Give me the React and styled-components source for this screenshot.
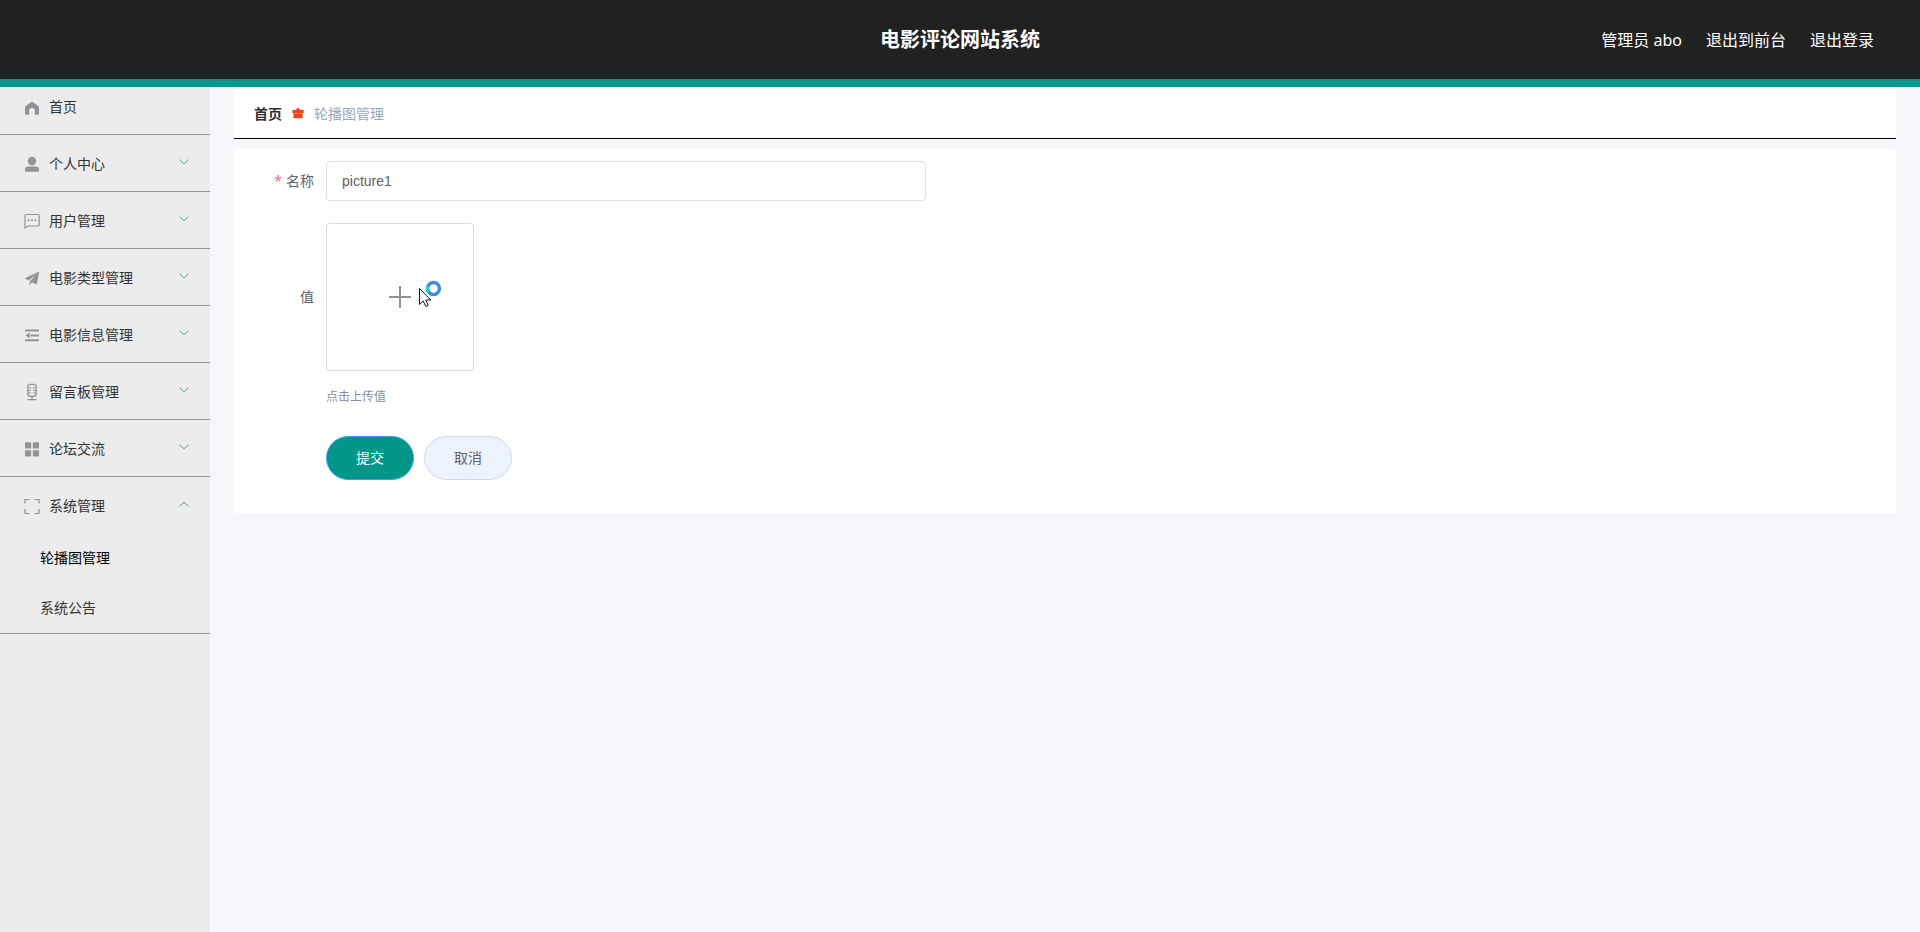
import React from "react";
import styled, { createGlobalStyle } from 'styled-components';

const GlobalStyles = createGlobalStyle`
  * {
    box-sizing: border-box;
  }
  body {
    margin: 0;
    background: #f5f7fb;
    color: #333;
    font-family: "Liberation Sans", "Noto Sans CJK SC", sans-serif;
    font-size: 14px;
  }
  button, input {
    font-family: inherit;
    font-size: inherit;
  }
`;

const Page = styled.div`
  display: flex;
  flex-direction: column;
  min-height: 100vh;
`;

const Header = styled.header`
  display: grid;
  grid-template-columns: 1fr auto 1fr;
  align-items: center;
  height: 87px;
  padding: 0 46px;
  background: #212121;
  border-bottom: 8px solid #009688;
  color: #fff;
  font-family: "Noto Sans", "Noto Sans CJK SC", sans-serif;
`;

const Title = styled.h1`
  grid-column: 2;
  margin: 0;
  font-size: 20px;
  line-height: 28px;
  font-weight: 700;
`;

const UserNav = styled.div`
  display: flex;
  justify-content: flex-end;
  gap: 24px;
  font-size: 16px;
  line-height: 24px;
`;

const HeaderLink = styled.a`
  color: #fff;
  text-decoration: none;
`;

const Body = styled.div`
  display: flex;
  flex: 1;
`;

const Sidebar = styled.nav`
  flex: 0 0 210px;
  background: #ececec;
`;

const MenuGroup = styled.div`
  border-bottom: 1px solid #8d9a9c;
`;

const MenuItem = styled.button`
  display: flex;
  align-items: center;
  gap: 8px;
  width: 100%;
  padding: ${props => (props.$first ? '8px' : '17px')} 21px 15px 23px;
  border: 0;
  background: none;
  color: #333;
  line-height: 24px;
  text-align: left;
  cursor: pointer;
`;

const MenuText = styled.span`
  flex: 1;
`;

const MenuIcon = styled.svg`
  flex: none;
  width: 18px;
  height: 18px;
  color: #909399;
`;

const Arrow = styled.svg`
  width: 10px;
  height: 10px;
  margin-bottom: 4px;
  fill: none;
  stroke: #5aa39b;
  transform: ${props => (props.$open ? 'rotate(180deg)' : 'none')};
`;

const SubItem = styled.a`
  display: block;
  padding-left: 40px;
  color: ${props => (props.$active ? '#000' : '#333')};
  line-height: 50px;
  text-decoration: none;
`;

const Main = styled.main`
  flex: 1;
  padding: 0 24px;
`;

const Breadcrumb = styled.div`
  display: flex;
  align-items: center;
  gap: 10px;
  height: 52px;
  padding: 0 20px;
  background: #fff;
  border-bottom: 1px solid #000;
`;

const CrumbHome = styled.a`
  color: #303133;
  font-weight: 700;
  text-decoration: none;
`;

const CrumbIcon = styled.svg`
  width: 12px;
  height: 12px;
`;

const CrumbText = styled.span`
  color: #97a8be;
`;

const FormCard = styled.form`
  margin-top: 10px;
  padding: 12px 12px 33px;
  background: #fff;
`;

const FormRow = styled.div`
  display: flex;
  align-items: center;
  margin-bottom: 22px;
`;

const Label = styled.label`
  flex: 0 0 80px;
  padding-right: 12px;
  color: #606266;
  line-height: 40px;
  text-align: right;
`;

const Required = styled.span`
  margin-right: 4px;
  color: #f56c6c;
  font-family: "Noto Sans", sans-serif;
`;

const TextInput = styled.input`
  width: 600px;
  height: 40px;
  padding: 0 15px;
  border: 1px solid #dcdfe6;
  border-radius: 4px;
  background: #fff;
  color: #606266;
  outline: none;
`;

const UploadBox = styled.button`
  position: relative;
  display: flex;
  align-items: center;
  justify-content: center;
  width: 148px;
  height: 148px;
  padding: 0;
  border: 1px solid #dcdcdc;
  border-radius: 4px;
  background: #fff;
`;

const Plus = styled.svg`
  width: 24px;
  height: 24px;
  stroke: #8c939d;
  stroke-width: 2;
`;

// busy pointer floating over the upload box
const Pointer = styled.svg`
  position: absolute;
  left: 92px;
  top: 56px;
  width: 24px;
  height: 30px;
`;

const Tip = styled.div`
  margin: -5px 0 30px 80px;
  color: #838fa1;
  font-size: 12px;
  line-height: 18px;
`;

const Actions = styled.div`
  display: flex;
  gap: 10px;
  padding-left: 80px;
`;

const ActionButton = styled.button`
  width: 88px;
  height: 44px;
  padding: 0 0 2px;
  border: 1px solid ${props => (props.$primary ? '#409eff' : '#d3dae6')};
  border-radius: 22px;
  background: ${props => (props.$primary ? '#009688' : '#ecf3fe')};
  color: ${props => (props.$primary ? '#fff' : '#606266')};
  cursor: pointer;
`;

const icons = {
  home: (
    <path d="M9 3.4 2.6 8Q2 8.4 2 9.2V15.6Q2 16.8 3.2 16.8H6.2V12.6Q6.2 10 9 10T11.8 12.6V16.8H14.8Q16 16.8 16 15.6V9.2Q16 8.4 15.4 8Z" fill="currentColor" />
  ),
  user: (
    <g fill="currentColor">
      <circle cx="9" cy="6" r="4.2" />
      <path d="M2 16.8V14.6Q2 11.4 5.2 11.4H12.8Q16 11.4 16 14.6V16.8Z" />
    </g>
  ),
  chat: (
    <g>
      <path d="M2 16V4Q2 2.5 3.4 2.5H14.8Q16.2 2.5 16.2 4V12.6Q16.2 14 14.8 14H5Z" fill="none" stroke="currentColor" strokeWidth="1.2" />
      <g fill="currentColor">
        <circle cx="5.6" cy="8.2" r="1" />
        <circle cx="9" cy="8.2" r="1" />
        <circle cx="12.4" cy="8.2" r="1" />
      </g>
    </g>
  ),
  plane: (
    <path d="M16.2 2.6 1.6 9.2 5.6 11.4 13 5.6 7 12.2 6.2 16.6 9 13.4 13.8 15.4Z" fill="currentColor" />
  ),
  fold: (
    <g fill="currentColor">
      <path d="M2 3.4H16V5.4H2ZM7.4 8.4H16V10.4H7.4ZM2 13.2H16V15.2H2Z" />
      <path d="M2.4 9.4 6.6 6.6V12.2Z" />
    </g>
  ),
  mic: (
    <g fill="none" stroke="currentColor" strokeLinecap="round" strokeWidth="1.2">
      <rect x="4.8" y="1.4" width="8.4" height="12" rx="2.4" />
      <path d="M9 13.4V16.4M5 16.6H13M5 5H7.8M5 7.5H7.8M5 10H7.8M13 5H10.2M13 7.5H10.2M13 10H10.2" />
    </g>
  ),
  grid: (
    <g fill="currentColor">
      <rect x="2" y="2.2" width="6.2" height="6.2" rx="0.8" />
      <rect x="9.8" y="2.2" width="6.2" height="6.2" rx="0.8" />
      <rect x="2" y="10.2" width="6.2" height="6.2" rx="0.8" />
      <rect x="9.8" y="10.2" width="6.2" height="6.2" rx="0.8" />
    </g>
  ),
  screen: (
    <path d="M2 6.5V2.5H6.5M11.5 2.5H16V6.5M16 12V16.5H11.5M6.5 16.5H2V12" fill="none" stroke="currentColor" strokeWidth="1.2" />
  ),
};

const menus = [
  { icon: 'home', text: '首页', single: true },
  { icon: 'user', text: '个人中心' },
  { icon: 'chat', text: '用户管理' },
  { icon: 'plane', text: '电影类型管理' },
  { icon: 'fold', text: '电影信息管理' },
  { icon: 'mic', text: '留言板管理' },
  { icon: 'grid', text: '论坛交流' },
  { icon: 'screen', text: '系统管理', children: ['轮播图管理', '系统公告'] },
];

const SideMenu = function() {
  const [open, setOpen] = React.useState('系统管理');
  const [active, setActive] = React.useState('轮播图管理');

  return (
    <Sidebar>
      {menus.map(menu => (
        <MenuGroup key={menu.text}>
          <MenuItem
            type="button"
            $first={menu.single}
            onClick={() => setOpen(open === menu.text ? '' : menu.text)}
          >
            <MenuIcon viewBox="0 0 18 18" aria-hidden="true">{icons[menu.icon]}</MenuIcon>
            <MenuText>{menu.text}</MenuText>
            {!menu.single && (
              <Arrow viewBox="0 0 10 10" aria-hidden="true" $open={open === menu.text}>
                <path d="M0.5 2.6 5 6.8 9.5 2.6" />
              </Arrow>
            )}
          </MenuItem>
          {open === menu.text && menu.children && menu.children.map(child => (
            <SubItem key={child} href="#" $active={active === child} onClick={() => setActive(child)}>
              {child}
            </SubItem>
          ))}
        </MenuGroup>
      ))}
    </Sidebar>
  );
}

const App = function() {
  const [name, setName] = React.useState('picture1');

  return (
    <Page>
      <GlobalStyles />
      <Header>
        <Title>电影评论网站系统</Title>
        <UserNav>
          <span>管理员 abo</span>
          <HeaderLink href="#">退出到前台</HeaderLink>
          <HeaderLink href="#">退出登录</HeaderLink>
        </UserNav>
      </Header>
      <Body>
        <SideMenu />
        <Main>
          <Breadcrumb>
            <CrumbHome href="#">首页</CrumbHome>
            <CrumbIcon viewBox="0 0 12 12" aria-hidden="true">
              <path d="M4 3 4.8 1.6 6 0.6 7.2 1.6 8 3H11.6V6H0.4V3Z" fill="#f4431c" />
              <path d="M1.4 6H10.6V11.2H1.4Z" fill="#f4431c" />
              <path d="M1.4 6.5H10.6" stroke="#fa8a5c" strokeWidth="0.8" />
            </CrumbIcon>
            <CrumbText>轮播图管理</CrumbText>
          </Breadcrumb>
          <FormCard onSubmit={e => e.preventDefault()}>
            <FormRow>
              <Label htmlFor="name"><Required>*</Required>名称</Label>
              <TextInput id="name" type="text" value={name} onChange={e => setName(e.target.value)} />
            </FormRow>
            <FormRow>
              <Label htmlFor="upload">值</Label>
              <UploadBox id="upload" type="button">
                <Plus viewBox="0 0 24 24" aria-hidden="true">
                  <path d="M12 1V23M1 12H23" />
                </Plus>
                <Pointer viewBox="0 0 24 30" aria-hidden="true">
                  <circle cx="14.5" cy="8.5" r="6" fill="#fff" stroke="#3a8fdc" strokeWidth="3.4" />
                  <path d="M8.9 6.4A6 6 0 0 0 9.6 12" fill="none" stroke="#2bc4e6" strokeWidth="3.4" />
                  <path d="M0.5 8.5V24.5L4.2 21 6.8 26.5 9.2 25.4 6.8 20H11.8Z" fill="#fff" stroke="#111" />
                </Pointer>
              </UploadBox>
            </FormRow>
            <Tip>点击上传值</Tip>
            <Actions>
              <ActionButton type="submit" $primary>提交</ActionButton>
              <ActionButton type="button">取消</ActionButton>
            </Actions>
          </FormCard>
        </Main>
      </Body>
    </Page>
  );
}
export default App;
